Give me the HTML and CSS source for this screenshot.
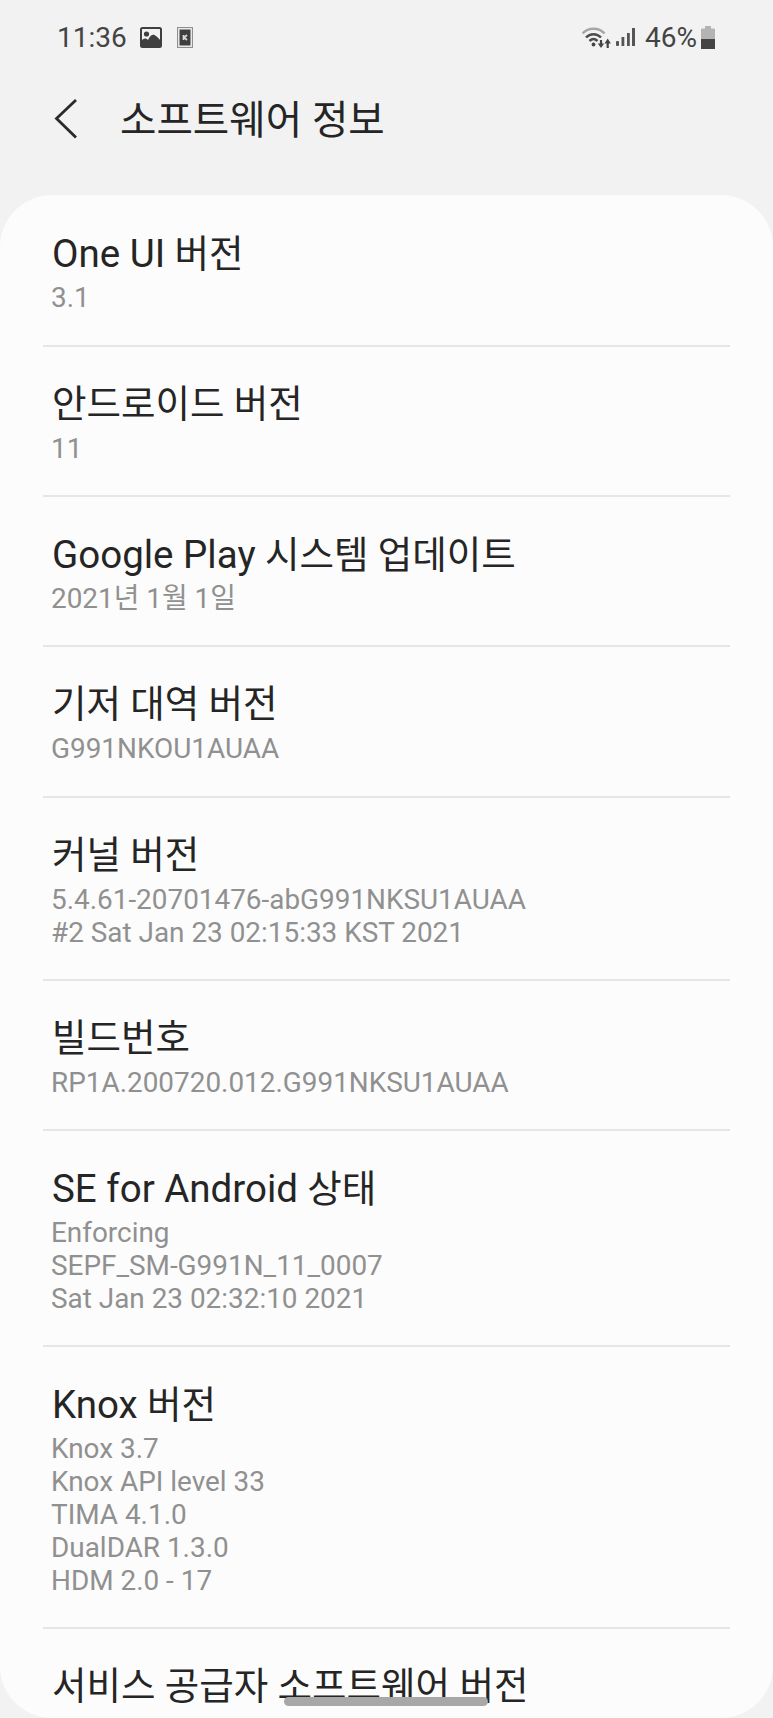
FILE: index.html
```html
<!DOCTYPE html>
<html lang="ko">
<head>
<meta charset="utf-8">
<title>소프트웨어 정보</title>
<link rel="stylesheet" href="styles.css">
</head>
<body>
<div class="screen">
  <div class="status">
    <div class="status-left">
      <span class="time">11:36</span>
      <svg class="ic-photo" width="22" height="21" viewBox="0 0 22 21"><rect x="1" y="1" width="20" height="19" rx="1.500" fill="#f2f2f2" stroke="#3f3f3f" stroke-width="2"/><circle cx="6.500" cy="7" r="2.600" fill="#3f3f3f"/><path d="M1 19v-4.500c2-3 4.500-4 7-1.500 2-4.500 4.500-6 6.500-5 2 1 4 3 6.500 6V19z" fill="#3f3f3f"/></svg>
      <svg class="ic-card" width="16" height="21" viewBox="0 0 16 21"><rect x="0.500" y="0.500" width="15" height="20" fill="none" stroke="#8f8f8f" stroke-width="1.200"/><rect x="2.500" y="2.500" width="11" height="16" fill="#3f3f3f"/><path d="M6.500 8v5M10 8l-2.800 2.500L10 13" fill="none" stroke="#d8d8d8" stroke-width="1.700"/></svg>
    </div>
    <div class="status-right">
      <svg class="ic-wifi" width="29" height="21" viewBox="0 0 29 21"><path d="M0.500 6.500C6 0 17 0 22.500 6.500" fill="none" stroke="#a6a6a6" stroke-width="2.500"/><path d="M4 10.500c4-4.500 11-4.500 15 0" fill="none" stroke="#4d4d4d" stroke-width="2.500"/><path d="M7.500 14c2.500-2.500 5.500-2.500 8 0" fill="none" stroke="#4d4d4d" stroke-width="2.500"/><circle cx="11.500" cy="17.500" r="1.900" fill="#444"/><path d="M19 13v4" stroke="#444" stroke-width="2.200"/><path d="M15.800 16.500h6.400L19 21z" fill="#444"/><path d="M25.700 21v-5" stroke="#444" stroke-width="2.200"/><path d="M22.500 16.500h6.400L25.700 11.500z" fill="#444"/></svg>
      <svg class="ic-signal" width="19" height="18" viewBox="0 0 19 18"><rect x="0" y="13" width="3" height="5" rx="1" fill="#555"/><rect x="5.500" y="9" width="2.800" height="9" fill="#555"/><rect x="11" y="5" width="2.800" height="13" fill="#555"/><rect x="16" y="0" width="3" height="18" fill="#555"/></svg>
      <span class="pct">46%</span>
      <svg class="ic-batt" width="14" height="23" viewBox="0 0 14 23"><path d="M4 0h6v2.500h3a1 1 0 0 1 1 1V23H0V3.500a1 1 0 0 1 1-1h3z" fill="#b3b3b3"/><rect x="0" y="13" width="14" height="10" fill="#444"/></svg>
    </div>
  </div>

  <header class="appbar">
    <svg class="back" width="24" height="42" viewBox="0 0 24 42"><path d="M22 2L2.500 20.500 22 39.500" fill="none" stroke="#2a2a2a" stroke-width="2.800"/></svg>
    <h1 class="page-title">소프트웨어 정보</h1>
  </header>

  <main class="card">
    <section class="row">
      <div class="row-title"><span class="latin">One UI</span> 버전</div>
      <div class="row-sub">3.1</div>
    </section>
    <section class="row">
      <div class="row-title">안드로이드 버전</div>
      <div class="row-sub">11</div>
    </section>
    <section class="row">
      <div class="row-title"><span class="latin">Google Play</span> 시스템 업데이트</div>
      <div class="row-sub">2021년 1월 1일</div>
    </section>
    <section class="row">
      <div class="row-title">기저 대역 버전</div>
      <div class="row-sub">G991NKOU1AUAA</div>
    </section>
    <section class="row">
      <div class="row-title">커널 버전</div>
      <div class="row-sub">5.4.61-20701476-abG991NKSU1AUAA</div>
      <div class="row-sub">#2 Sat Jan 23 02:15:33 KST 2021</div>
    </section>
    <section class="row">
      <div class="row-title">빌드번호</div>
      <div class="row-sub">RP1A.200720.012.G991NKSU1AUAA</div>
    </section>
    <section class="row">
      <div class="row-title"><span class="latin">SE for Android</span> 상태</div>
      <div class="row-sub">Enforcing</div>
      <div class="row-sub">SEPF_SM-G991N_11_0007</div>
      <div class="row-sub">Sat Jan 23 02:32:10 2021</div>
    </section>
    <section class="row">
      <div class="row-title"><span class="latin">Knox</span> 버전</div>
      <div class="row-sub">Knox 3.7</div>
      <div class="row-sub">Knox API level 33</div>
      <div class="row-sub">TIMA 4.1.0</div>
      <div class="row-sub">DualDAR 1.3.0</div>
      <div class="row-sub">HDM 2.0 - 17</div>
    </section>
    <section class="row row-last">
      <div class="row-title">서비스 공급자 소프트웨어 버전</div>
    </section>
  </main>
  <div class="nav-pill"></div>
</div>
</body>
</html>
```
FILE: styles.css
```css
* { box-sizing: border-box; }
html, body { margin: 0; padding: 0; }
body {
  background: #f2f2f2;
  font-family: Roboto, "Noto Sans CJK KR", sans-serif;
  color: #252525;
}
.screen {
  position: relative;
  width: 773px;
  height: 1718px;
  overflow: hidden;
  display: flex;
  flex-direction: column;
}
.status {
  height: 74px;
  flex: none;
  display: flex;
  justify-content: space-between;
  align-items: center;
  padding: 0 58px 0 57px;
  color: #444;
}
.status-left, .status-right { display: flex; align-items: center; }
.time { font-size: 28px; margin-right: 13px; }
.ic-photo { margin-right: 15px; }
.ic-wifi { margin-right: 5px; }
.ic-signal { margin-right: 10px; }
.pct { font-size: 28px; margin-right: 4px; }
.appbar {
  height: 121px;
  flex: none;
  display: flex;
  align-items: flex-start;
  padding: 24px 0 0 54px;
}
.back { flex: none; }
.page-title {
  margin: 0 0 0 42px;
  font-size: 39.600px;
  line-height: 46px;
  font-weight: 400;
  color: #252525;
}
.card {
  flex: 1;
  background: #fcfcfc;
  border-radius: 52px;
  padding: 0 43px;
  overflow: hidden;
  min-height: 0;
}
.row {
  padding: 30px 9px 30.150px 9px;
  border-bottom: 2px solid #e6e6e6;
}
.row:first-child { padding: 30.500px 9px 31.650px 9px; }
.row-last { border-bottom: 0; }
.row-title {
  height: 55px;
  font-size: 37.500px;
  line-height: 55px;
}
.latin { font-size: 38.500px; }
.row-sub {
  height: 33px;
  font-size: 27.900px;
  line-height: 33px;
  color: #909090;
  margin-left: -1px;
}
.nav-pill {
  position: absolute;
  left: 284px;
  top: 1697px;
  width: 204px;
  height: 9px;
  border-radius: 5px;
  background: #a8a8a8;
}
```
